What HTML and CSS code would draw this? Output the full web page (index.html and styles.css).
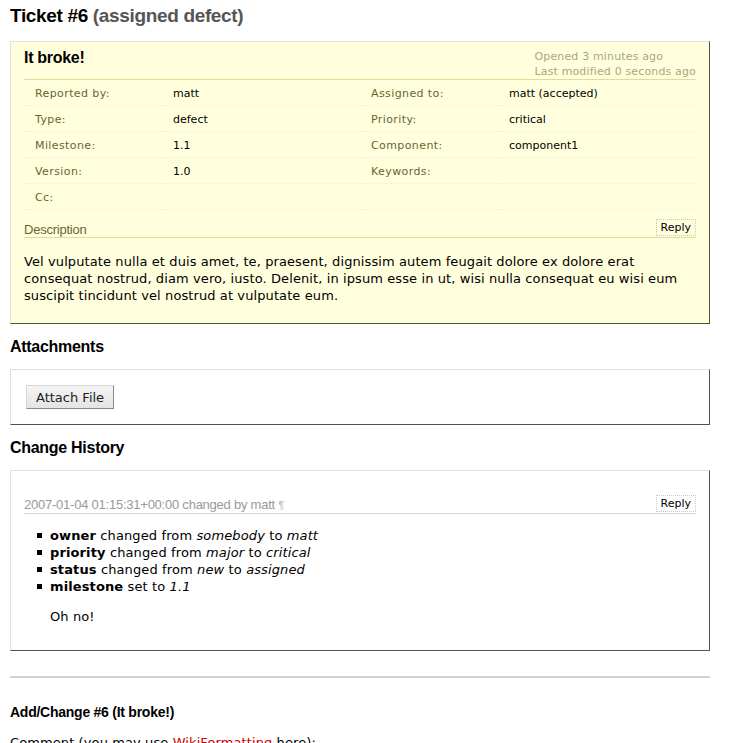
FILE: index.html
```html
<!DOCTYPE html>
<html>
<head>
<meta charset="utf-8">
<title>Ticket #6</title>
<link rel="stylesheet" href="styles.css">
</head>
<body>
<div class="page">
  <h1 class="title">Ticket #6 <span class="status">(assigned defect)</span></h1>

  <div class="ticket">
    <div class="ticket-head">
      <h2 class="summary">It broke!</h2>
      <div class="dates">
        <div>Opened 3 minutes ago</div>
        <div>Last modified 0 seconds ago</div>
      </div>
    </div>
    <div class="props">
      <div class="th">Reported by:</div><div class="td">matt</div>
      <div class="th">Assigned to:</div><div class="td">matt (accepted)</div>
      <div class="th">Type:</div><div class="td">defect</div>
      <div class="th">Priority:</div><div class="td">critical</div>
      <div class="th">Milestone:</div><div class="td">1.1</div>
      <div class="th">Component:</div><div class="td">component1</div>
      <div class="th">Version:</div><div class="td">1.0</div>
      <div class="th">Keywords:</div><div class="td"></div>
      <div class="th">Cc:</div><div class="td"></div>
      <div class="th"></div><div class="td"></div>
    </div>
    <div class="desc-head">
      <span class="desc-title">Description</span>
      <button class="reply" type="button">Reply</button>
    </div>
    <p class="desc">Vel vulputate nulla et duis amet, te, praesent, dignissim autem feugait dolore ex dolore erat consequat nostrud, diam vero, iusto. Delenit, in ipsum esse in ut, wisi nulla consequat eu wisi eum suscipit tincidunt vel nostrud at vulputate eum.</p>
  </div>

  <h2 class="section">Attachments</h2>
  <div class="box attachments">
    <button class="btn" type="button">Attach File</button>
  </div>

  <h2 class="section">Change History</h2>
  <div class="box changelog">
    <div class="change-head">
      <span class="change-title">2007-01-04 01:15:31+00:00 changed by matt <span class="pilcrow">¶</span></span>
      <button class="reply" type="button">Reply</button>
    </div>
    <ul class="changes">
      <li><strong>owner</strong> changed from <em>somebody</em> to <em>matt</em></li>
      <li><strong>priority</strong> changed from <em>major</em> to <em>critical</em></li>
      <li><strong>status</strong> changed from <em>new</em> to <em>assigned</em></li>
      <li><strong>milestone</strong> set to <em>1.1</em></li>
    </ul>
    <p class="comment">Oh no!</p>
  </div>

  <hr class="rule">

  <h3 class="add">Add/Change #6 (It broke!)</h3>
  <p class="label">Comment (you may use <a class="missing" href="#">WikiFormatting</a> here):</p>
</div>
</body>
</html>
```
FILE: styles.css
```css
html, body {
  margin: 0;
  padding: 0;
  background: #fff;
}
body {
  font-family: "DejaVu Sans", Verdana, sans-serif;
  font-size: 13px;
  color: #000;
}
.page {
  width: 700px;
  margin-left: 10px;
}
.title, .summary, .section, .add, .desc-title, .change-title {
  font-family: "Liberation Sans", Arial, sans-serif;
  letter-spacing: -0.018em;
}
.title {
  font-size: 19px;
  line-height: 22px;
  font-weight: bold;
  margin: 5px 0 14px;
}
.status {
  color: #555;
}
.ticket {
  background: #ffd;
  border: 1px solid;
  border-color: #e3e3d3 #55553a #55553a #e3e3d3;
  padding: 7px 13px 0;
}
.ticket-head {
  display: flex;
  justify-content: space-between;
  align-items: flex-start;
  height: 30px;
}
.summary {
  margin: 0;
  font-size: 16px;
  line-height: 17px;
  font-weight: bold;
}
.dates {
  color: #a8a880;
  font-size: 11px;
  letter-spacing: 0.15px;
  line-height: 15px;
  text-align: left;
}
.props {
  display: grid;
  grid-template-columns: 138px 198px 138px 198px;
  border-top: 1px solid #dd9;
}
.th, .td {
  font-size: 11px;
  height: 25px;
  line-height: 27px;
  border-bottom: 1px dotted #eed;
  padding: 0 11px;
  white-space: nowrap;
  overflow: hidden;
}
.th {
  color: #663;
  letter-spacing: 0.4px;
}
.desc-head {
  display: flex;
  justify-content: space-between;
  align-items: flex-end;
  height: 27px;
  border-bottom: 1px solid #dd9;
}
.desc-title {
  color: #663;
  font-size: 13px;
  line-height: 15px;
}
.reply {
  font-family: "DejaVu Sans", Verdana, sans-serif;
  font-size: 11px;
  line-height: 15px;
  height: 17px;
  padding: 0 4px;
  margin: 0 0 1px;
  background: transparent;
  color: #000;
  border: 1px dotted #c8c8c8;
  border-radius: 0;
}
.desc {
  margin: 15px 0 0;
  padding-bottom: 19px;
  line-height: 17px;
  letter-spacing: 0.1px;
}
.section {
  font-size: 16px;
  line-height: 19px;
  font-weight: bold;
  margin: 13px 0 13px;
}
.box {
  border: 1px solid;
  border-color: #e0e0d8 #55553a #55553a #e0e0d8;
  background: #fff;
}
.attachments {
  padding: 15px 15px 15px;
}
.btn {
  font-family: "DejaVu Sans", Verdana, sans-serif;
  font-size: 13px;
  color: #222;
  height: 24px;
  padding: 0 9px;
  background: linear-gradient(#f4f4f4, #e4e4e4);
  border: 1px solid;
  border-color: #d8d8d8 #8a8a8a #8a8a8a #d8d8d8;
  border-radius: 0;
  display: block;
}
.changelog {
  padding: 24px 13px 25px;
}
.change-head {
  display: flex;
  justify-content: space-between;
  align-items: flex-end;
  border-bottom: 1px solid #d7d7d7;
}
.change-title {
  color: #999;
  font-size: 13px;
  line-height: 15px;
}
.pilcrow {
  color: #bbb;
  font-size: 11px;
}
.changes {
  margin: 13px 0 0;
  padding-left: 26px;
  list-style: none;
  line-height: 17px;
  letter-spacing: 0.12px;
}
.changes li::before {
  content: "";
  display: inline-block;
  width: 5px;
  height: 5px;
  background: #000;
  margin-left: -13px;
  margin-right: 8px;
  vertical-align: 2px;
}
.comment {
  margin: 13px 0 0;
  padding-left: 26px;
  line-height: 17px;
  letter-spacing: 0.1px;
}
.rule {
  border: 0;
  border-top: 2px solid #d3d3c8;
  height: 0;
  margin: 25px 0 0;
}
.add {
  font-size: 14px;
  line-height: 17px;
  font-weight: bold;
  margin: 26px 0 0;
}
.label {
  margin: 13px 0 0;
  line-height: 17px;
  letter-spacing: 0.1px;
}
.missing {
  color: #c00;
  text-decoration: none;
}
```
